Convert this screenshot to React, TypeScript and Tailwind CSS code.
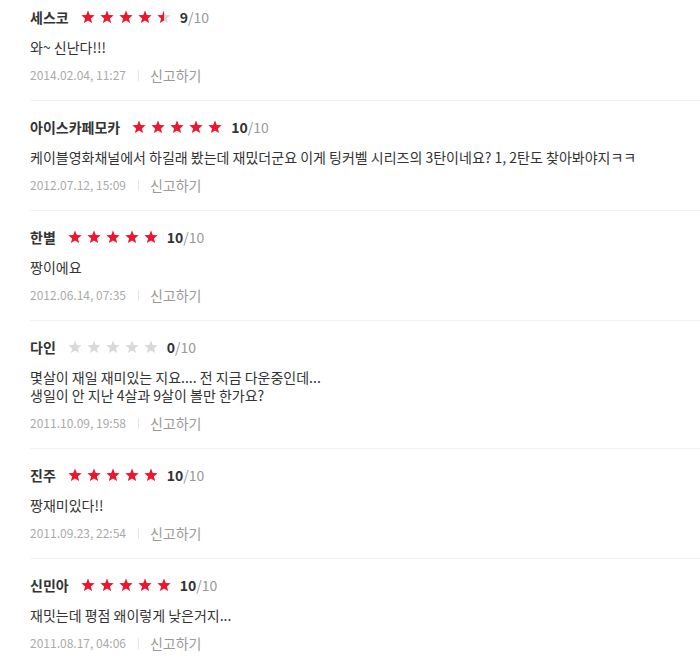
import React from "react";

type Review = {
  name: string;
  score: number;
  text: string[];
  date: string;
};

const reviews: Review[] = [
  { name: "세스코", score: 9, text: ["와~ 신난다!!!"], date: "2014.02.04, 11:27" },
  {
    name: "아이스카페모카",
    score: 10,
    text: ["케이블영화채널에서 하길래 봤는데 재밌더군요 이게 팅커벨 시리즈의 3탄이네요? 1, 2탄도 찾아봐야지ㅋㅋ"],
    date: "2012.07.12, 15:09",
  },
  { name: "한별", score: 10, text: ["짱이에요"], date: "2012.06.14, 07:35" },
  {
    name: "다인",
    score: 0,
    text: ["몇살이 재일 재미있는 지요.... 전 지금 다운중인데...", "생일이 안 지난 4살과 9살이 볼만 한가요?"],
    date: "2011.10.09, 19:58",
  },
  { name: "진주", score: 10, text: ["짱재미있다!!"], date: "2011.09.23, 22:54" },
  { name: "신민아", score: 10, text: ["재밋는데 평점 왜이렇게 낮은거지..."], date: "2011.08.17, 04:06" },
];

const STAR = "M7 0.6 L8.75 5.1 L13.6 5.35 L9.85 8.4 L11.1 13.1 L7 10.45 L2.9 13.1 L4.15 8.4 L0.4 5.35 L5.25 5.1 Z";

function Star({ fill, id }: { fill: number; id: string }) {
  return (
    <svg width="14" height="14" viewBox="0 0 14 14" className="block">
      <defs>
        <clipPath id={id}>
          <rect x="0" y="0" width={14 * fill} height="14" />
        </clipPath>
      </defs>
      <path d={STAR} fill="#d9d9d9" />
      {fill > 0 && <path d={STAR} fill="#f0142d" clipPath={`url(#${id})`} />}
    </svg>
  );
}

function Stars({ score, idx }: { score: number; idx: number }) {
  const val = score / 2;
  return (
    <div className="flex items-center gap-[5px]">
      {[0, 1, 2, 3, 4].map((i) => {
        const f = Math.max(0, Math.min(1, val - i));
        return <Star key={i} fill={f} id={`c${idx}-${i}`} />;
      })}
    </div>
  );
}

export default function App() {
  return (
    <div
      className="w-[700px] h-[662px] overflow-hidden bg-white"
      style={{ fontFamily: '"Noto Sans CJK KR", "Noto Sans", sans-serif' }}
    >
      <ul className="pl-[30px]">
        {reviews.map((r, idx) => (
          <li
            key={idx}
            className={`border-b border-[#f2f2f2] pb-[16px] ${idx === 0 ? "pt-[7px]" : "pt-[16px]"}`}
          >
            <div className="flex h-[20px] items-center">
              <span className="text-[14px] font-bold leading-[20px] text-[#333]">{r.name}</span>
              <div className="ml-[12px]">
                <Stars score={r.score} idx={idx} />
              </div>
              <span className="ml-[9px] text-[14px] leading-[20px]">
                <span className="font-bold text-[#333]">{r.score}</span>
                <span className="text-[#999]">/10</span>
              </span>
            </div>
            <div className="mt-[11px] text-[14px] leading-[18px] text-[#333]">
              {r.text.map((t, i) => (
                <p key={i}>{t}</p>
              ))}
            </div>
            <div className="mt-[10px] flex h-[18px] items-center text-[12px] leading-[18px] text-[#aaa]">
              <span>{r.date}</span>
              <span className="ml-[12px] mr-[11px] h-[11px] w-px bg-[#e6e6e6]" />
              <span className="text-[14px] text-[#9a9a9a]">신고하기</span>
            </div>
          </li>
        ))}
      </ul>
    </div>
  );
}
